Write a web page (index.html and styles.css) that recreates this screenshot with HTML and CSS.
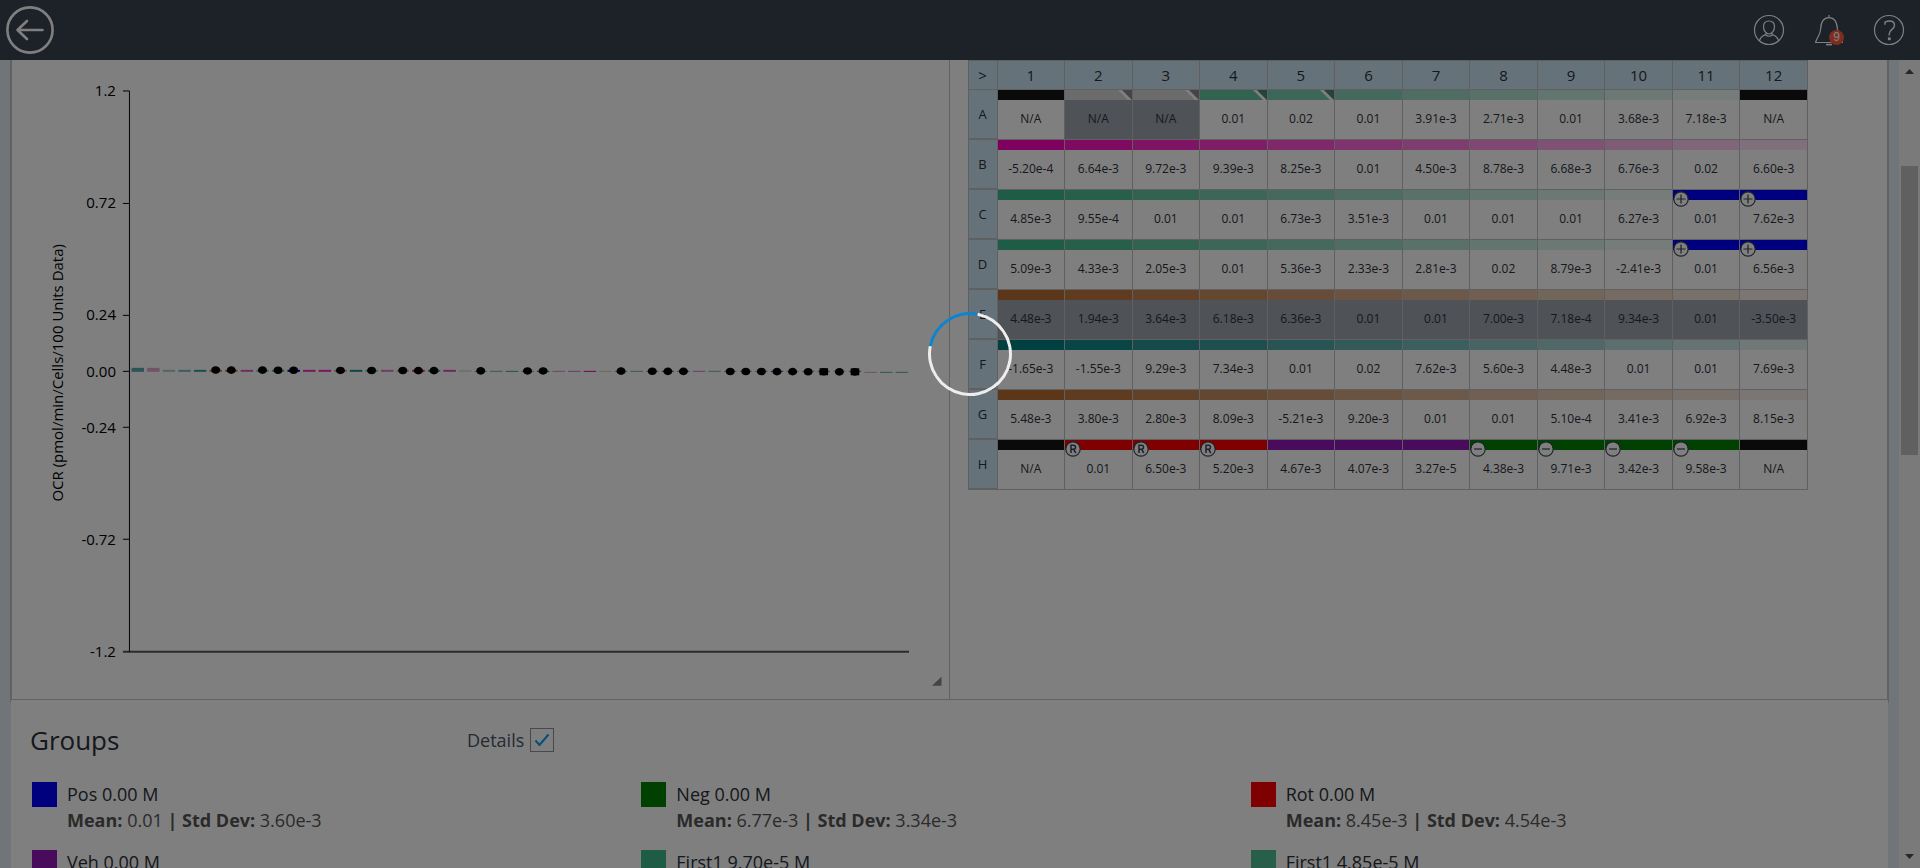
FILE: index.html
```html
<!DOCTYPE html>
<html lang="en">
<head>
<meta charset="utf-8">
<title>Plate analysis</title>
<link rel="stylesheet" href="styles.css">
</head>
<body>
<div class="app">
  <header class="topbar">
    <button class="icon-button back" type="button" aria-label="Back">
      <svg width="48" height="48" viewBox="0 0 48 48" fill="none" stroke="#fff" stroke-linecap="round" stroke-linejoin="round">
        <circle cx="24" cy="24" r="22.6" stroke-width="2.6"/>
        <path d="M36.500 24H11.500M21 15L11.500 24L21 33" stroke-width="2.600"/>
      </svg>
    </button>
    <nav class="tools">
      <button class="icon-button" type="button" aria-label="Account">
        <svg width="32" height="32" viewBox="0 0 32 32" fill="none" stroke="#fff" stroke-width="1.2">
          <circle cx="16" cy="16" r="14.500"/>
          <path d="M16 7c-3.500 0-5.500 2.500-5.500 5.700 0 3.600 2.400 7.300 5.500 7.300s5.500-3.700 5.500-7.300C21.500 9.500 19.500 7 16 7z"/>
          <path d="M6.500 26.800c.6-3 2.200-4.800 6-6.200l1-1.600M25.500 26.800c-.6-3-2.200-4.800-6-6.200l-1-1.600M12.500 20.600c1.800 2.200 5.200 2.200 7 0"/>
        </svg>
      </button>
      <button class="icon-button bell" type="button" aria-label="Notifications">
        <svg width="32" height="32" viewBox="0 0 32 32" fill="none" stroke="#fff" stroke-width="1.2">
          <path d="M16 1v2.500M2.600 28.500c1.400-5.800 4.600-6.500 5-13.500C8 8 10 3.600 16 3.600S24 8 24.400 15c.4 7 3.600 7.700 5 13.500z"/>
          <path d="M13 30.600h6" stroke-width="1.600"/>
        </svg>
        <span class="count">9</span>
      </button>
      <button class="icon-button" type="button" aria-label="Help">
        <svg width="32" height="32" viewBox="0 0 32 32" fill="none" stroke="#fff" stroke-width="1.2">
          <circle cx="16" cy="16" r="14.500"/>
          <path d="M12 10.800V8.200C13.500 7.400 15 7 16.500 7c3 0 5 1.600 5 4.300 0 4-5.300 4.200-5.300 8.700v1.500" stroke-width="1.400"/>
          <rect x="15.500" y="24" width="1.600" height="1.600" fill="#fff"/>
        </svg>
      </button>
    </nav>
  </header>

  <div class="body">
    <main class="page">
      <div class="frame">
        <div class="panes">
          <section class="pane chart-pane">
            <svg class="chart" id="chart" viewBox="12 60 937 639" role="img" aria-label="OCR bar chart">
              <path class="baseline" d="M123 652H909.500"/>
              <path class="axis" d="M123 91H129.500V652M123 203.500H129M123 315.500H129M123 371.500H129M123 427.500H129M123 539.500H129"/>
              <g class="ticks">
                <text x="116" y="96">1.2</text>
                <text x="116" y="208">0.72</text>
                <text x="116" y="320">0.24</text>
                <text x="116" y="377">0.00</text>
                <text x="116" y="433">-0.24</text>
                <text x="116" y="545">-0.72</text>
                <text x="116" y="657">-1.2</text>
              </g>
              <text class="axis-title" transform="translate(63 373) rotate(-90)">OCR (pmol/min/Cells/100 Units Data)</text>
              <path class="grip" d="M942 677V686H932.500z"/>
            </svg>
          </section>
          <section class="pane plate-pane">
            <table class="plate">
              <thead><tr id="plate-head"><th scope="col">&gt;</th></tr></thead>
              <tbody id="plate-body"></tbody>
            </table>
          </section>
        </div>
      </div>
      <section class="groups">
        <div class="groups-head">
          <h2>Groups</h2>
          <div class="details">
            <label for="details">Details</label>
            <span class="tick">
              <input type="checkbox" id="details" checked>
              <svg width="18" height="18" viewBox="0 0 18 18" fill="none" stroke="#00a0f0" stroke-width="2"><path d="M2.500 9.500L6.500 14L15.500 3.500"/></svg>
            </span>
          </div>
        </div>
        <ul class="group-list">
          <li><span class="swatch pos"></span><div><p class="name">Pos 0.00 M</p><p class="stats"><b>Mean:</b> 0.01 <b>|</b> <b>Std Dev:</b> 3.60e-3</p></div></li>
          <li><span class="swatch neg"></span><div><p class="name">Neg 0.00 M</p><p class="stats"><b>Mean:</b> 6.77e-3 <b>|</b> <b>Std Dev:</b> 3.34e-3</p></div></li>
          <li><span class="swatch rot"></span><div><p class="name">Rot 0.00 M</p><p class="stats"><b>Mean:</b> 8.45e-3 <b>|</b> <b>Std Dev:</b> 4.54e-3</p></div></li>
          <li><span class="swatch veh"></span><div><p class="name">Veh 0.00 M</p></div></li>
          <li><span class="swatch first"></span><div><p class="name">First1 9.70e-5 M</p></div></li>
          <li><span class="swatch first second"></span><div><p class="name">First1 4.85e-5 M</p></div></li>
        </ul>
      </section>
    </main>
    <div class="scrollbar" aria-hidden="true">
      <svg width="21" height="24" viewBox="0 0 21 24"><path d="M6 14L10.500 9L15 14z" fill="#505050"/></svg>
      <span class="before"></span>
      <span class="thumb"></span>
      <span class="after"></span>
      <svg width="21" height="24" viewBox="0 0 21 24"><path d="M6 10L10.500 15L15 10z" fill="#505050"/></svg>
    </div>
  </div>
</div>
<div class="shade"></div>
<div class="spinner" role="status" aria-label="Loading"></div>
<script src="plate.js"></script>
</body>
</html>
```

FILE: styles.css
```css
* { box-sizing: border-box; }

body {
  margin: 0;
  font-family: "Open Sans", "Noto Sans", sans-serif;
  color: #2b3038;
  background: #fff;
}

h2, p, ul { margin: 0; padding: 0; }

.app {
  display: flex;
  flex-direction: column;
  height: 100vh;
  overflow: hidden;
}

.topbar {
  flex: none;
  display: flex;
  align-items: center;
  justify-content: space-between;
  height: 60px;
  padding: 0 15px 0 6px;
  background: #3a4250;
}

.icon-button {
  position: relative;
  display: block;
  padding: 0;
  border: 0;
  background: none;
}

.icon-button svg { display: block; }

.tools { display: flex; gap: 28px; }

.count {
  position: absolute;
  right: 1px;
  bottom: 1px;
  width: 15px;
  height: 15px;
  border-radius: 50%;
  background: #ff5a3c;
  color: #fff;
  font-size: 12px;
  line-height: 15px;
  text-align: center;
}

.body {
  flex: 1;
  display: flex;
  min-height: 0;
  overflow: hidden;
}

.page {
  flex: 1;
  min-width: 0;
  padding: 0 10px;
  background: #dfeaf2;
}

.frame {
  padding-bottom: 3px;
  border: solid #c4c4c4;
  border-width: 0 1px;
  background: #fff;
}

.panes {
  display: grid;
  grid-template-columns: repeat(2, minmax(0, 1fr));
  border: solid #c4c4c4;
  border-width: 0 1px 1px;
}

.chart-pane { border-right: 1px solid #c4c4c4; }

.chart {
  display: block;
  width: 100%;
  height: auto;
  font-size: 15px;
}

.axis { fill: none; stroke: #000; stroke-width: 1; }
.baseline { stroke: #555; stroke-width: 2; }
.ticks { text-anchor: end; }
.axis-title { text-anchor: middle; }
.grip { fill: #888; }

.plate-pane { padding: 0 79px 0 18px; }

.plate {
  width: 100%;
  table-layout: fixed;
  border-collapse: separate;
  border-spacing: 0;
  font-size: 12px;
  color: #2b3038;
}

.plate th {
  padding: 0;
  border: solid #c0c0c0;
  border-width: 0 1px 1px 0;
  background: #cbe5f4;
  font-weight: 400;
}

.plate thead th {
  height: 30px;
  border-top-width: 1px;
  font-size: 15px;
  line-height: 28px;
}

.plate th:first-child { width: 30px; border-left-width: 1px; }

.plate tbody th { border-bottom-width: 2px; font-size: 13px; line-height: 48px; }

.plate td {
  position: relative;
  height: 50px;
  padding: 0;
  border: solid #c0c0c0;
  border-width: 0 1px 1px 0;
  text-align: center;
  vertical-align: top;
}

.bar { display: block; height: 10px; }
.value { display: block; height: 39px; line-height: 38px; white-space: nowrap; }
.excluded .value { background: #9fa5ad; }

.corner, .mark { position: absolute; top: 0; right: 0; }
.mark { top: 1px; right: auto; left: 0; }

.groups {
  margin: 0 1px;
  padding: 22px 30px 0 19px;
  background: #fff;
  height: 200px;
}

.groups-head {
  display: grid;
  grid-template-columns: 437px 1fr;
  align-items: center;
  height: 30px;
  margin-bottom: 27px;
}

.groups h2 { font-size: 26px; font-weight: 400; line-height: 30px; }

.details {
  display: flex;
  align-items: center;
  gap: 6px;
  font-size: 18px;
  color: #4a5468;
}

.tick { position: relative; width: 24px; height: 24px; }

.tick input {
  appearance: none;
  display: block;
  width: 24px;
  height: 24px;
  margin: 0;
  border: 1px solid #8c929c;
  background: #fff;
}

.tick svg { position: absolute; top: 3px; left: 3px; pointer-events: none; }

.group-list {
  display: grid;
  grid-template-columns: repeat(3, 1fr);
  row-gap: 16px;
  list-style: none;
}

.group-list li { display: flex; gap: 10px; padding-left: 2px; font-size: 18px; }

.swatch { flex: none; width: 25px; height: 25px; }
.pos { background: #0000ff; }
.neg { background: #008000; }
.rot { background: #ff0000; }
.veh { background: #9216b8; }
.first { background: #3eb88c; }
.second { background: #51bf97; }

.name { line-height: 24px; }
.stats { line-height: 28px; color: #555; }
.stats b { font-weight: 700; }

.scrollbar {
  flex: none;
  display: flex;
  flex-direction: column;
  width: 21px;
  padding: 0;
  background: #f4f4f4;
}

.scrollbar svg { display: block; flex: none; }
.before { flex: 82; }
.thumb { flex: 289; margin: 0 2px; background: #c1c1c1; }
.after { flex: 389; }

.shade {
  position: fixed;
  inset: 0;
  background: rgba(0, 0, 0, 0.5);
}

.spinner {
  position: fixed;
  top: 312px;
  left: calc(50% - 32px);
  width: 84px;
  height: 84px;
  border: 3px solid #ededed;
  border-top-color: #0d84cf;
  border-radius: 50%;
  transform: rotate(-34deg);
}
```

FILE: plate.js
```javascript
const rows = {
  A: ["N/A", "N/A", "N/A", "0.01", "0.02", "0.01", "3.91e-3", "2.71e-3", "0.01", "3.68e-3", "7.18e-3", "N/A"],
  B: ["-5.20e-4", "6.64e-3", "9.72e-3", "9.39e-3", "8.25e-3", "0.01", "4.50e-3", "8.78e-3", "6.68e-3", "6.76e-3", "0.02", "6.60e-3"],
  C: ["4.85e-3", "9.55e-4", "0.01", "0.01", "6.73e-3", "3.51e-3", "0.01", "0.01", "0.01", "6.27e-3", "0.01", "7.62e-3"],
  D: ["5.09e-3", "4.33e-3", "2.05e-3", "0.01", "5.36e-3", "2.33e-3", "2.81e-3", "0.02", "8.79e-3", "-2.41e-3", "0.01", "6.56e-3"],
  E: ["4.48e-3", "1.94e-3", "3.64e-3", "6.18e-3", "6.36e-3", "0.01", "0.01", "7.00e-3", "7.18e-4", "9.34e-3", "0.01", "-3.50e-3"],
  F: ["-1.65e-3", "-1.55e-3", "9.29e-3", "7.34e-3", "0.01", "0.02", "7.62e-3", "5.60e-3", "4.48e-3", "0.01", "0.01", "7.69e-3"],
  G: ["5.48e-3", "3.80e-3", "2.80e-3", "8.09e-3", "-5.21e-3", "9.20e-3", "0.01", "0.01", "5.10e-4", "3.41e-3", "6.92e-3", "8.15e-3"],
  H: ["N/A", "0.01", "6.50e-3", "5.20e-3", "4.67e-3", "4.07e-3", "3.27e-5", "4.38e-3", "9.71e-3", "3.42e-3", "9.58e-3", "N/A"]
};

const fade = (rgb, step, total) =>
  `rgba(${rgb}, ${(1 - (step - 1) * (total === 10 ? 0.1 : 0.08)).toFixed(2)})`;
const GREEN = "62, 184, 140";
const BLACK = "#141414";

function barColor(row, col) {
  if (row === "A") {
    if (col === 1 || col === 12) return BLACK;
    return col < 4 ? "#d6d6d6" : fade(GREEN, col - 1, 10);
  }
  if (row === "B") return fade("255, 0, 191", col, 12);
  if (row === "C" || row === "D") return col > 10 ? "#0000ff" : fade(GREEN, col, 10);
  if (row === "E" || row === "G") return fade("184, 108, 48", col, 12);
  if (row === "F") return fade("0, 128, 128", col, 12);
  if (col === 1 || col === 12) return BLACK;
  if (col < 5) return "#ff0000";
  return col < 8 ? "#9216b8" : "#008000";
}

const signs = {
  plus: '<path d="M8 3.500v9M3.500 8h9"/>',
  minus: '<path d="M4 8h8"/>',
  ref: '<path d="M6 12V4.200h2.500a2 2 0 0 1 0 4H6M8.500 8.200L10.800 12" stroke-width="1.500"/>'
};

function markFor(row, col) {
  if ((row === "C" || row === "D") && col > 10) return "plus";
  if (row === "H" && col > 1 && col < 5) return "ref";
  if (row === "H" && col > 7 && col < 12) return "minus";
  return "";
}

const head = document.getElementById("plate-head");
for (let col = 1; col <= 12; col++) {
  head.insertAdjacentHTML("beforeend", `<th scope="col">${col}</th>`);
}

let html = "";
for (const [row, values] of Object.entries(rows)) {
  html += `<tr><th scope="row">${row}</th>`;
  values.forEach((value, i) => {
    const col = i + 1;
    const excluded = row === "E" || (row === "A" && (col === 2 || col === 3));
    const mark = markFor(row, col);
    html += `<td${excluded ? ' class="excluded"' : ""}><span class="bar" style="background:${barColor(row, col)}"></span>`;
    if (row === "A" && col > 1 && col < 6) {
      html += `<svg class="corner" width="14" height="10" viewBox="0 0 14 10"><path d="M0 0H4L14 10H10z" fill="#fff"/><path d="M4 0H14V10z" fill="${col < 4 ? "#8a8a8a" : "#4c8672"}"/></svg>`;
    }
    if (mark) {
      html += `<svg class="mark" width="16" height="16" viewBox="0 0 16 16" fill="none" stroke="#3a4250" stroke-width="1.2"><circle cx="8" cy="8" r="7.200" fill="#fff"/>${signs[mark]}</svg>`;
    }
    html += `<span class="value">${value}</span></td>`;
  });
  html += "</tr>";
}
document.getElementById("plate-body").innerHTML = html;

/* Each bar: colour, then "o" when it carries a point, "s" for a square point. */
const bars = [
  ["#5cabab"], ["#e0a8cf"], ["#a8cfcf"], ["#7fbaba"], ["#3c9a9a"], ["#c98d5f", "o"], ["#c98d5f", "o"], ["#e05cbd"],
  ["#8fcdb5", "o"], ["#5fbf9a", "o"], ["#0000ff", "o"], ["#f02fc0"], ["#f02fc0"], ["#d3a889", "o"], ["#1f8c8c"],
  ["#7fcbae", "o"], ["#e07cc6"], ["#c0c0c0", "o"], ["#ff2020", "o"], ["#4fbc94", "o"], ["#e04fb8"], ["#e4dede"],
  ["#5fbf9a", "o"], ["#6fb3a8"], ["#3c9a9a"], ["#c98d5f", "o"], ["#008000", "o"], ["#dd84c5"], ["#dd74c0"],
  ["#e000a8"], ["#e0c8c8"], ["#a0a0a0", "o"], ["#6fb3b3"], ["#a0a0a0", "o"], ["#b86c30", "o"], ["#4fa894", "o"],
  ["#dd74c0"], ["#7fb8ac"], ["#7fb8ac", "o"], ["#8fb8b8", "o"], ["#c98d5f", "o"], ["#9216b8", "o"], ["#d3a889", "o"],
  ["#6fb3a8", "o"], ["#808080", "s"], ["#c0c0c0", "o"], ["#808080", "s"], ["#dca8b8"], ["#5cabab"], ["#5cabab"]
];

let marks = "";
bars.forEach(([color, point], i) => {
  const x = 131.6 + i * 15.6;
  const height = i < 2 ? 4 : i < 22 ? 2 : 1;
  const top = i > 46 ? 372 : 372 - height;
  marks += `<rect x="${x.toFixed(1)}" y="${top}" width="12.500" height="${height}" fill="${color}"/>`;
  const cx = (x + 6.2).toFixed(1);
  const cy = (370 + (i * 2) / 46).toFixed(1);
  if (point) marks += `<ellipse cx="${cx}" cy="${cy}" rx="4.500" ry="3.800"/>`;
  if (point === "s") marks += `<rect x="${(x + 2).toFixed(1)}" y="${cy - 3.5}" width="8.500" height="7"/>`;
});
document.getElementById("chart").insertAdjacentHTML("beforeend", marks);
```
